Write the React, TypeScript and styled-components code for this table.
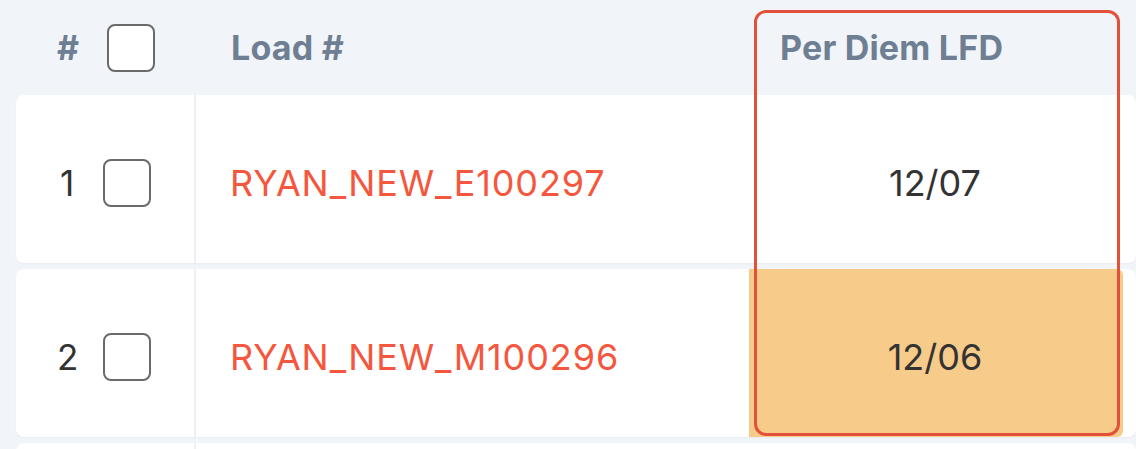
import React from "react";
import styled, { createGlobalStyle } from "styled-components";

const GlobalStyle = createGlobalStyle`
  html, body {
    margin: 0;
    padding: 0;
    background: #f1f4f8;
    font-family: Inter, "Noto Sans", "Liberation Sans", sans-serif;
    overflow: hidden;
  }
`;

// Whole table area.
const Table = styled.div`
  position: relative;
  width: 1136px;
  height: 449px;
  padding-left: 16px;
  box-sizing: border-box;
  overflow: hidden;
`;

// Shared column grid.
const Grid = styled.div`
  display: grid;
  grid-template-columns: 180px 553px 374px;
`;

const HeaderRow = styled(Grid)`
  height: 95px;
  align-items: center;
`;

const HeaderCell = styled.div<{ $pad?: number }>`
  display: flex;
  align-items: center;
  gap: 28px;
  padding-left: ${(p) => p.$pad ?? 35}px;
  font-size: 34px;
  font-weight: 700;
  color: #6e7f93;
  letter-spacing: 0.2px;
`;

const Body = styled.div`
  display: flex;
  flex-direction: column;
  gap: 6px;
`;

const Row = styled(Grid)`
  height: 168px;
  background: #ffffff;
  border-radius: 8px;
  box-shadow: 0 1px 2px rgba(30, 50, 80, 0.04);
`;

const Cell = styled.div<{ $divider?: boolean; $center?: boolean; $highlight?: boolean }>`
  display: flex;
  align-items: center;
  justify-content: ${(p) => (p.$center ? "center" : "flex-start")};
  border-right: ${(p) => (p.$divider ? "2px solid #eef0f3" : "none")};
  background: ${(p) => (p.$highlight ? "#f7cb89" : "transparent")};
  border-radius: ${(p) => (p.$highlight ? "0 6px 6px 0" : "0")};
`;

const IndexCell = styled(Cell)`
  gap: 26px;
  padding-left: 41px;
  padding-top: 8px;
`;

const IndexNum = styled.span`
  width: 20px;
  text-align: center;
  font-size: 35px;
  color: #333333;
`;

const Checkbox = styled.span`
  display: inline-block;
  width: 44px;
  height: 44px;
  border: 2.5px solid #6a6a6a;
  border-radius: 8px;
  background: #ffffff;
  box-sizing: content-box;
`;

const LoadLink = styled.span`
  padding-left: 34px;
  padding-top: 8px;
  font-size: 36px;
  color: #f4573d;
  letter-spacing: 0.9px;
`;

const DateText = styled.span`
  padding-top: 8px;
  padding-right: 2px;
  font-size: 36px;
  color: #333333;
`;

// Red highlight outline drawn over the Per Diem column.
const Outline = styled.div`
  position: absolute;
  left: 754px;
  top: 10px;
  width: 360px;
  height: 420px;
  border: 3px solid #e4513b;
  border-radius: 12px;
  pointer-events: none;
`;

interface LoadRow {
  index: number;
  load: string;
  perDiem: string;
  late?: boolean;
}

const rows: LoadRow[] = [
  { index: 1, load: "RYAN_NEW_E100297", perDiem: "12/07" },
  { index: 2, load: "RYAN_NEW_M100296", perDiem: "12/06", late: true },
];

const App = () => {
  return (
    <>
      <GlobalStyle />
      <Table>
        <HeaderRow>
          <HeaderCell $pad={41}>
            #
            <Checkbox />
          </HeaderCell>
          <HeaderCell>Load #</HeaderCell>
          <HeaderCell $pad={31}>Per Diem LFD</HeaderCell>
        </HeaderRow>
        <Body>
          {rows.map((r) => (
            <Row key={r.index}>
              <IndexCell $divider>
                <IndexNum>{r.index}</IndexNum>
                <Checkbox />
              </IndexCell>
              <Cell>
                <LoadLink>{r.load}</LoadLink>
              </Cell>
              <Cell $center $highlight={r.late}>
                <DateText>{r.perDiem}</DateText>
              </Cell>
            </Row>
          ))}
          <Row>
            <Cell $divider />
            <Cell />
            <Cell />
          </Row>
        </Body>
        <Outline />
      </Table>
    </>
  );
};

export default App;
